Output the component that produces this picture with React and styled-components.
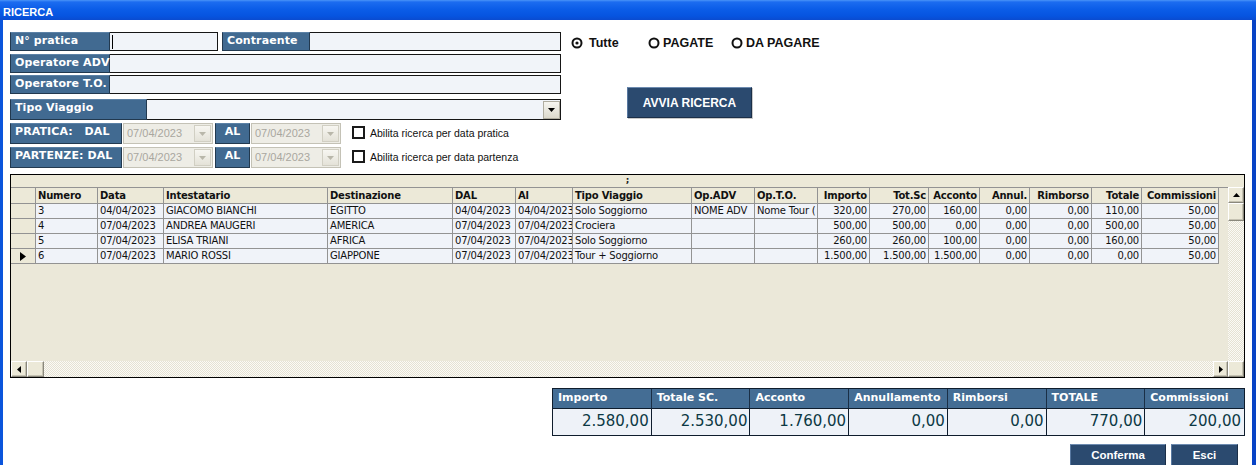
import React from 'react';
import styled, { createGlobalStyle } from 'styled-components';

const GlobalStyle = createGlobalStyle`
    html, body {
        margin: 0;
        padding: 0;
        background: #fff;
    }
    body {
        font-family: "DejaVu Sans", Verdana, sans-serif;
    }
    * {
        box-sizing: border-box;
    }
`;

const steel = '#416a91';
const beige = '#ece9d8';
const gridLine = '#939393';

const Window = styled.div`
    width: 1256px;
    height: 465px;
    overflow: hidden;
    display: flex;
    flex-direction: column;
`;

const TitleBar = styled.div`
    height: 20px;
    flex: none;
    padding: 4px 0 0 3px;
    background: linear-gradient(#4a94f8 0, #1c6cf0 2px, #0b5de8 45%, #0654e0 80%, #0a4bd0 100%);
    color: #fff;
    font: bold 11px "Liberation Sans", Arial, sans-serif;
    line-height: 16px;
`;

const Frame = styled.div`
    flex: 1;
    background: #fff;
    border-left: 3px solid #0b55dc;
    border-right: 4px solid #0843c6;
    padding: 12px 0 0 7px;
`;

const TopArea = styled.div`
    display: flex;
    height: 136px;
`;

const Form = styled.div`
    width: 551px;
    display: flex;
    flex-direction: column;
`;

const FormRow = styled.div`
    display: flex;
    align-items: stretch;
    height: ${p => p.$h}px;
    margin-top: ${p => p.$mt || 0}px;
`;

const Label = styled.div`
    width: ${p => p.$w}px;
    flex: none;
    background: ${steel};
    border: 1px solid #22394f;
    border-top-color: #5b81a6;
    color: #fff;
    font-weight: bold;
    font-size: 11px;
    line-height: 14px;
    padding: 1px 0 0 ${p => p.$pl ?? 4}px;
    text-align: ${p => p.$center ? 'center' : 'left'};
    white-space: pre;
    margin-left: ${p => p.$ml || 0}px;
    letter-spacing: 0.1px;
`;

const TextBox = styled.div`
    width: ${p => p.$w ? `${p.$w}px` : 'auto'};
    flex: ${p => p.$w ? 'none' : 1};
    background: #f1f4f9;
    border: 1px solid #161616;
    border-left: none;
    position: relative;
`;

const Caret = styled.span`
    position: absolute;
    left: 2px;
    top: 2px;
    width: 1px;
    height: 14px;
    background: #000;
`;

const ComboButton = styled.div`
    position: absolute;
    right: 0;
    top: 1px;
    width: 17px;
    height: 18px;
    background: linear-gradient(#f6f5f0, #dcd9cc);
    border: 1px solid #b0ada0;
    display: flex;
    align-items: center;
    justify-content: center;
`;

const DateBox = styled.div`
    width: 90px;
    flex: none;
    margin-left: 1px;
    background: #eeede6;
    border: 1px solid #c4c2b6;
    color: #a9a79f;
    font: 11px "Liberation Sans", Arial, sans-serif;
    line-height: 18px;
    padding-left: 3px;
    position: relative;
`;

const DateButton = styled.div`
    position: absolute;
    right: 1px;
    top: 1px;
    width: 17px;
    height: 17px;
    background: linear-gradient(#f7f6f1, #e4e2d8);
    border: 1px solid #d1cfc3;
    display: flex;
    align-items: center;
    justify-content: center;
`;

const CheckWrap = styled.label`
    display: flex;
    align-items: center;
    gap: 5px;
    margin-left: 11px;
    padding-bottom: 2px;
    font: 10.5px "Liberation Sans Narrow", "Liberation Sans", Arial, sans-serif;
    color: #111;
`;

const CheckBox = styled.span`
    width: 13px;
    height: 13px;
    border: 2px solid #1a1a1a;
    background: #fff;
`;

const Side = styled.div`
    flex: 1;
    padding: 5px 0 0 10px;
    display: flex;
    flex-direction: column;
`;

const RadioRow = styled.div`
    display: flex;
    height: 12px;
    align-items: center;
`;

const RadioItem = styled.div`
    width: ${p => p.$w ? `${p.$w}px` : 'auto'};
    display: flex;
    align-items: center;
    gap: ${p => p.$gap || 4}px;
    font: bold 12.5px "Liberation Sans", Arial, sans-serif;
    color: #111;
`;

const SearchButton = styled.button`
    margin: 38px 0 0 56px;
    width: 125px;
    height: 31px;
    background: #2b4a6f;
    border: 1px solid #1b2f48;
    border-top-color: #6d8bb0;
    border-left-color: #5878a0;
    box-shadow: 1px 1px 0 #c9c9c9;
    color: #fff;
    font: bold 12px "Liberation Sans", Arial, sans-serif;
    padding: 0;
`;

const GridFrame = styled.div`
    margin: 6px 0 0 0;
    width: 1235px;
    height: 204px;
    border: 1px solid #000;
    background: ${beige};
    display: flex;
    flex-direction: column;
`;

const Caption = styled.div`
    height: 12px;
    flex: none;
    text-align: center;
    font: bold 9px "DejaVu Sans", sans-serif;
    line-height: 10px;
    color: #222;
`;

const GridBody = styled.div`
    flex: 1;
    display: flex;
    min-height: 0;
`;

const TableArea = styled.div`
    flex: 1;
    background: #ebe8d9;
`;

const colTemplate = widths => widths.map(w => `${w}px`).join(' ');

const GridRow = styled.div`
    display: grid;
    grid-template-columns: ${p => p.$cols};
    height: ${p => p.$h}px;
    border-top: ${p => p.$top ? `1px solid ${gridLine}` : 'none'};
`;

const Cell = styled.div`
    border-right: 1px solid ${gridLine};
    border-bottom: 1px solid ${gridLine};
    background: ${p => p.$sel ? beige : p.$head ? beige : '#f0f3f9'};
    font-size: 10px;
    font-weight: ${p => p.$head ? 'bold' : 'normal'};
    letter-spacing: -0.2px;
    color: #111;
    text-align: ${p => p.$right ? 'right' : 'left'};
    padding: 0 2px;
    line-height: 14px;
    white-space: nowrap;
    overflow: hidden;
    display: flex;
    align-items: center;
    justify-content: ${p => p.$sel ? 'center' : p.$right ? 'flex-end' : 'flex-start'};
`;

const track = `repeating-conic-gradient(#fbfaf6 0 25%, #e5e2d3 0 50%) 0 0 / 2px 2px`;

const VScroll = styled.div`
    width: 16px;
    flex: none;
    background: ${track};
    display: flex;
    flex-direction: column;
`;

const ScrollBtn = styled.div`
    width: ${p => p.$w || 16}px;
    height: ${p => p.$h || 16}px;
    flex: none;
    background: ${beige};
    border: 1px solid;
    border-color: #fff #8a887c #8a887c #fff;
    box-shadow: inset -1px -1px 0 #c5c2b2;
    display: flex;
    align-items: center;
    justify-content: center;
`;

const HScroll = styled.div`
    height: 16px;
    flex: none;
    display: flex;
    background: ${track};
`;

const HTrack = styled.div`
    flex: 1;
`;

const Bottom = styled.div`
    display: flex;
    flex-direction: column;
    align-items: flex-end;
    width: 1235px;
    margin-top: 10px;
`;

const Totals = styled.div`
    width: 693px;
    display: grid;
    grid-template-columns: repeat(7, 1fr);
    border: 1px solid #0f1d2d;
`;

const TotHead = styled.div`
    height: 20px;
    background: #446d94;
    border-right: 1px solid ${p => p.$last ? 'transparent' : '#1a2f46'};
    border-bottom: 1px solid #0f1d2d;
    color: #fff;
    font-weight: bold;
    font-size: 11px;
    line-height: 15px;
    padding: 1px 0 0 5px;
`;

const TotValue = styled.div`
    height: 26px;
    background: #eef2f8;
    border-right: 1px solid ${p => p.$last ? 'transparent' : '#0f1d2d'};
    color: #0c3944;
    font-size: 15px;
    text-align: right;
    padding-right: 2px;
    line-height: 25px;
`;

const ButtonRow = styled.div`
    display: flex;
    gap: 5px;
    margin-top: 8px;
    padding-right: 7px;
`;

const FooterButton = styled.button`
    width: ${p => p.$w}px;
    height: 24px;
    background: #2b4a6f;
    border: 1px solid #1b2f48;
    border-top-color: #6d8bb0;
    border-left-color: #5878a0;
    color: #fff;
    font: bold 11.5px "Liberation Sans", Arial, sans-serif;
    padding: 0 0 2px;
`;

const ArrowDown = ({ color = '#000' }) => (
    <svg width="7" height="4" viewBox="0 0 7 4">
        <path d="M0 0h7L3.5 4z" fill={color} />
    </svg>
);

const Arrow = ({ dir }) => {
    const paths = {
        up: 'M0 4h7L3.5 0z',
        left: 'M4 0v7L0 3.5z',
        right: 'M0 0v7L4 3.5z',
    };
    const horizontal = dir !== 'up';
    return (
        <svg width={horizontal ? 4 : 7} height={horizontal ? 7 : 4} viewBox={horizontal ? '0 0 4 7' : '0 0 7 4'}>
            <path d={paths[dir]} fill="#000" />
        </svg>
    );
};

const Radio = ({ checked }) => (
    <svg width="12" height="12" viewBox="0 0 12 12">
        <circle cx="6" cy="6" r="4.5" fill="#fff" stroke="#111" strokeWidth="2" />
        {checked && <circle cx="6" cy="6" r="1.6" fill="#111" />}
    </svg>
);

const columns = [
    { key: 'numero', title: 'Numero', width: 62 },
    { key: 'data', title: 'Data', width: 66 },
    { key: 'intestatario', title: 'Intestatario', width: 164 },
    { key: 'destinazione', title: 'Destinazione', width: 125 },
    { key: 'dal', title: 'DAL', width: 63 },
    { key: 'al', title: 'Al', width: 57 },
    { key: 'tipo', title: 'Tipo Viaggio', width: 119 },
    { key: 'adv', title: 'Op.ADV', width: 63 },
    { key: 'to', title: 'Op.T.O.', width: 63 },
    { key: 'importo', title: 'Importo', width: 52, right: true },
    { key: 'totsc', title: 'Tot.Sc', width: 59, right: true },
    { key: 'acconto', title: 'Acconto', width: 51, right: true },
    { key: 'annul', title: 'Annul.', width: 50, right: true },
    { key: 'rimborso', title: 'Rimborso', width: 62, right: true },
    { key: 'totale', title: 'Totale', width: 50, right: true },
    { key: 'comm', title: 'Commissioni', width: 77, right: true },
];

const cols = colTemplate([25, ...columns.map(c => c.width)]);

const rows = [
    {
        numero: '3', data: '04/04/2023', intestatario: 'GIACOMO BIANCHI', destinazione: 'EGITTO',
        dal: '04/04/2023', al: '04/04/2023', tipo: 'Solo Soggiorno', adv: 'NOME ADV', to: 'Nome Tour (',
        importo: '320,00', totsc: '270,00', acconto: '160,00', annul: '0,00', rimborso: '0,00', totale: '110,00', comm: '50,00',
    },
    {
        numero: '4', data: '07/04/2023', intestatario: 'ANDREA MAUGERI', destinazione: 'AMERICA',
        dal: '07/04/2023', al: '07/04/2023', tipo: 'Crociera', adv: '', to: '',
        importo: '500,00', totsc: '500,00', acconto: '0,00', annul: '0,00', rimborso: '0,00', totale: '500,00', comm: '50,00',
    },
    {
        numero: '5', data: '07/04/2023', intestatario: 'ELISA TRIANI', destinazione: 'AFRICA',
        dal: '07/04/2023', al: '07/04/2023', tipo: 'Solo Soggiorno', adv: '', to: '',
        importo: '260,00', totsc: '260,00', acconto: '100,00', annul: '0,00', rimborso: '0,00', totale: '160,00', comm: '50,00',
    },
    {
        numero: '6', data: '07/04/2023', intestatario: 'MARIO ROSSI', destinazione: 'GIAPPONE',
        dal: '07/04/2023', al: '07/04/2023', tipo: 'Tour + Soggiorno', adv: '', to: '',
        importo: '1.500,00', totsc: '1.500,00', acconto: '1.500,00', annul: '0,00', rimborso: '0,00', totale: '0,00', comm: '50,00',
        current: true,
    },
];

const totals = [
    ['Importo', '2.580,00'],
    ['Totale SC.', '2.530,00'],
    ['Acconto', '1.760,00'],
    ['Annullamento', '0,00'],
    ['Rimborsi', '0,00'],
    ['TOTALE', '770,00'],
    ['Commissioni', '200,00'],
];

const DateField = ({ value }) => (
    <DateBox>
        {value}
        <DateButton><ArrowDown color="#b9b7aa" /></DateButton>
    </DateBox>
);

const DateRow = ({ title, mt, check }) => (
    <FormRow $h={21} $mt={mt}>
        <Label $w={112}>{title}</Label>
        <DateField value="07/04/2023" />
        <Label $w={35} $ml={2} $pl={0} $center>AL</Label>
        <DateField value="07/04/2023" />
        <CheckWrap>
            <CheckBox />
            {check}
        </CheckWrap>
    </FormRow>
);

const App = () => (
    <Window>
        <GlobalStyle />
        <TitleBar>RICERCA</TitleBar>
        <Frame>
            <TopArea>
                <Form>
                    <FormRow $h={19}>
                        <Label $w={100}>N° pratica</Label>
                        <TextBox $w={108}><Caret /></TextBox>
                        <Label $w={88} $ml={4}>Contraente</Label>
                        <TextBox />
                    </FormRow>
                    <FormRow $h={19} $mt={3}>
                        <Label $w={100}>Operatore ADV</Label>
                        <TextBox />
                    </FormRow>
                    <FormRow $h={19} $mt={2}>
                        <Label $w={100}>Operatore T.O.</Label>
                        <TextBox />
                    </FormRow>
                    <FormRow $h={21} $mt={5}>
                        <Label $w={137}>Tipo Viaggio</Label>
                        <TextBox>
                            <ComboButton><ArrowDown /></ComboButton>
                        </TextBox>
                    </FormRow>
                    <DateRow title="PRATICA:   DAL" mt={3} check="Abilita ricerca per data pratica" />
                    <DateRow title="PARTENZE: DAL" mt={3} check="Abilita ricerca per data partenza" />
                </Form>
                <Side>
                    <RadioRow>
                        <RadioItem $w={77} $gap={6}><Radio checked />Tutte</RadioItem>
                        <RadioItem $w={83} $gap={3}><Radio />PAGATE</RadioItem>
                        <RadioItem $gap={3}><Radio />DA PAGARE</RadioItem>
                    </RadioRow>
                    <SearchButton>AVVIA RICERCA</SearchButton>
                </Side>
            </TopArea>

            <GridFrame>
                <Caption>;</Caption>
                <GridBody>
                    <TableArea>
                        <GridRow $cols={cols} $h={17} $top>
                            <Cell $sel $head />
                            {columns.map(c => (
                                <Cell key={c.key} $head $right={c.right}>{c.title}</Cell>
                            ))}
                        </GridRow>
                        {rows.map(r => (
                            <GridRow key={r.numero} $cols={cols} $h={15}>
                                <Cell $sel>
                                    {r.current && (
                                        <svg width="6" height="9" viewBox="0 0 6 9">
                                            <path d="M0 0v9l6-4.5z" fill="#000" />
                                        </svg>
                                    )}
                                </Cell>
                                {columns.map(c => (
                                    <Cell key={c.key} $right={c.right}>{r[c.key]}</Cell>
                                ))}
                            </GridRow>
                        ))}
                    </TableArea>
                    <VScroll>
                        <ScrollBtn><Arrow dir="up" /></ScrollBtn>
                        <ScrollBtn $h={18} />
                    </VScroll>
                </GridBody>
                <HScroll>
                    <ScrollBtn><Arrow dir="left" /></ScrollBtn>
                    <ScrollBtn $w={17} />
                    <HTrack />
                    <ScrollBtn $w={15}><Arrow dir="right" /></ScrollBtn>
                    <ScrollBtn $w={16} />
                </HScroll>
            </GridFrame>

            <Bottom>
                <Totals>
                    {totals.map(([t], i) => (
                        <TotHead key={t} $last={i === totals.length - 1}>{t}</TotHead>
                    ))}
                    {totals.map(([t, v], i) => (
                        <TotValue key={t} $last={i === totals.length - 1}>{v}</TotValue>
                    ))}
                </Totals>
                <ButtonRow>
                    <FooterButton $w={96}>Conferma</FooterButton>
                    <FooterButton $w={67}>Esci</FooterButton>
                </ButtonRow>
            </Bottom>
        </Frame>
    </Window>
);

export default App;
